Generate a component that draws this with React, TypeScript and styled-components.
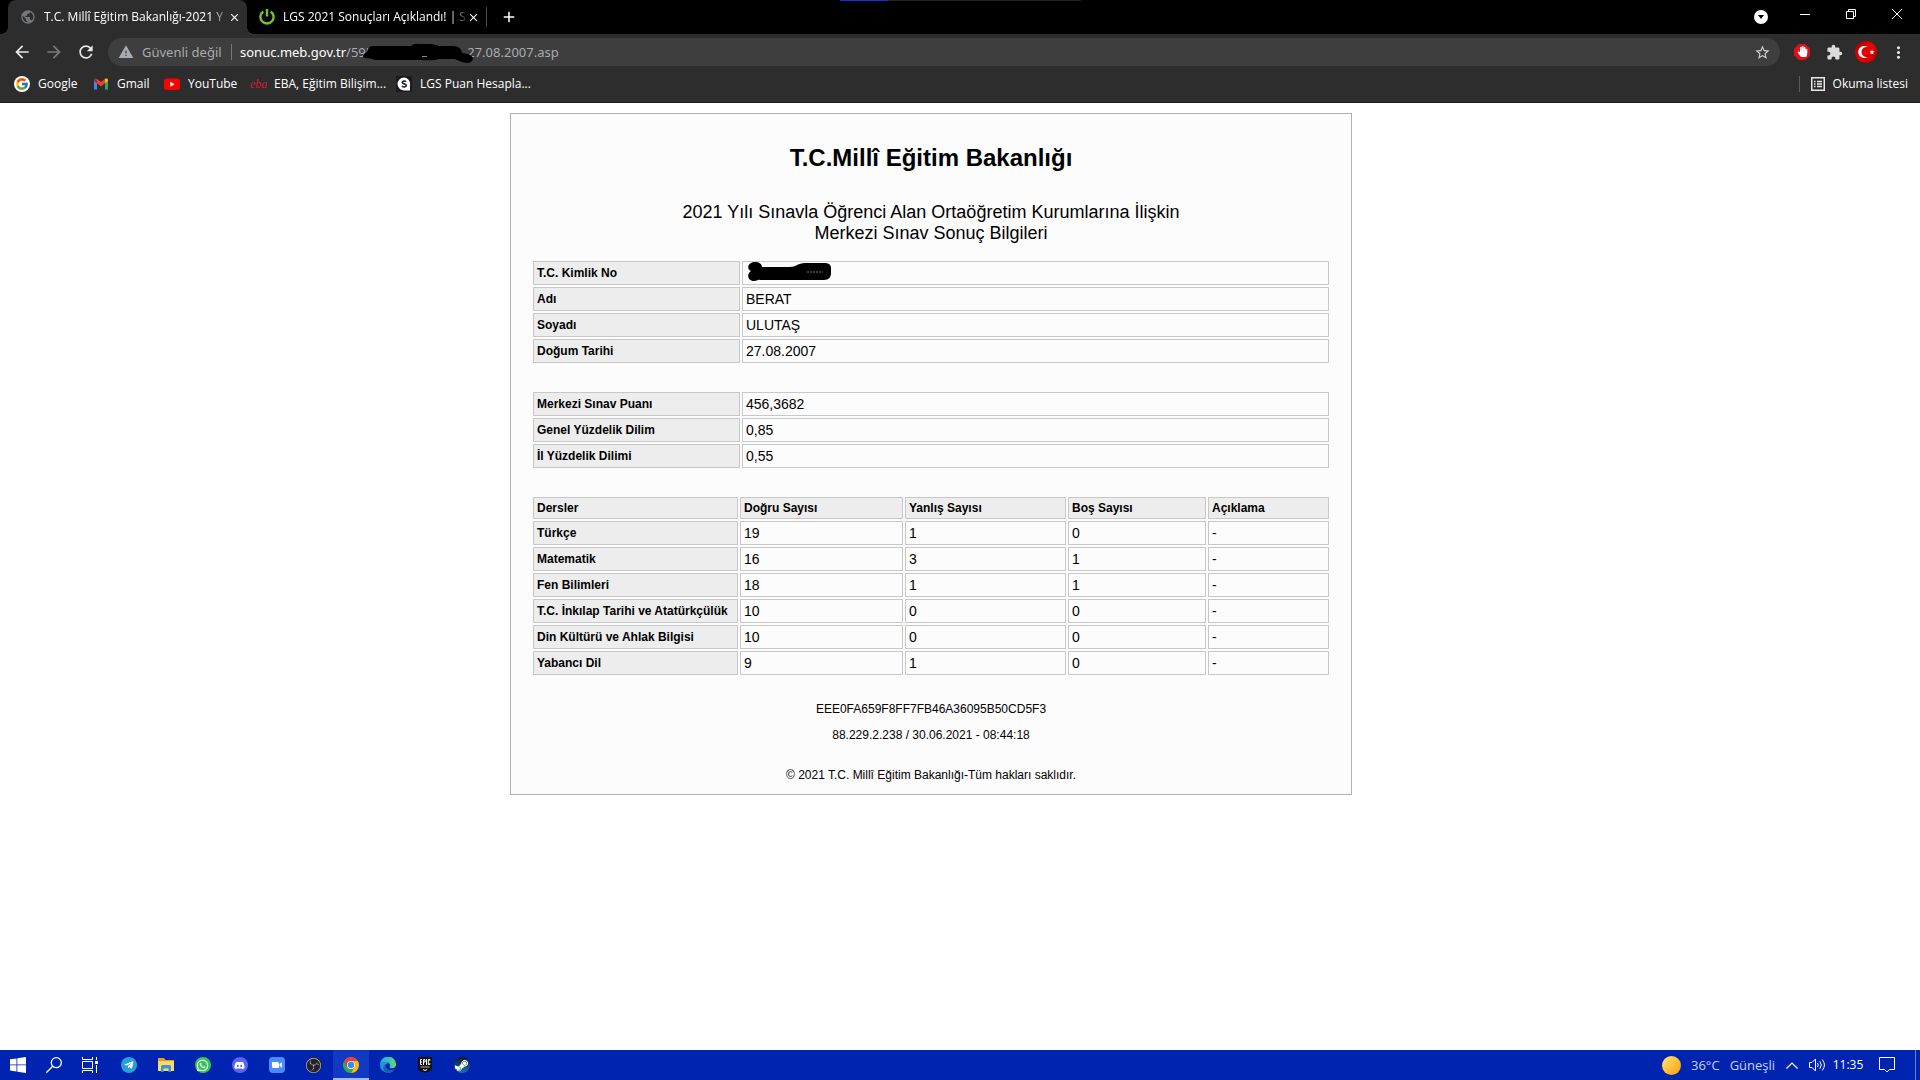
import React from "react";
import styled, { createGlobalStyle } from "styled-components";
import {
  MdAdd,
  MdArrowBack,
  MdArrowForward,
  MdClose,
  MdExtension,
  MdMoreVert,
  MdPublic,
  MdRefresh,
  MdStarBorder,
  MdWarning,
} from "react-icons/md";
import { FcGoogle } from "react-icons/fc";
import { FaDiscord, FaHandPaper, FaSteamSymbol, FaTelegramPlane, FaWhatsapp } from "react-icons/fa";
import { SiObsstudio } from "react-icons/si";

const uiFont = `"Open Sans", "Noto Sans", sans-serif`;
const pageFont = `"Liberation Sans", Arial, sans-serif`;

const GlobalStyle = createGlobalStyle`
  *, *::before, *::after { box-sizing: border-box; }
  html, body, #root { height: 100%; margin: 0; }
  body { background: #fff; }
  button, input { font: inherit; color: inherit; border: 0; padding: 0; margin: 0; background: none; }
  svg { display: block; flex: none; }
`;

const Screen = styled.div`
  display: flex;
  flex-direction: column;
  min-height: 100vh;
  font-family: ${uiFont};
  font-size: 12px;
  line-height: 16px;
`;

/* ---------- browser chrome ---------- */

const TabStrip = styled.header`
  position: relative;
  display: flex;
  height: 34px;
  padding-left: 8px;
  background: #000;
  color: #fff;
`;

const LoadingBar = styled.div`
  position: absolute;
  top: 0;
  left: 840px;
  width: 241px;
  height: 1px;
  background: linear-gradient(to right, #1433d6 48px, #222 48px);
`;

const Tab = styled.div<{ $active?: boolean }>`
  position: relative;
  display: flex;
  align-items: center;
  width: 239px;
  padding: 0 6px 0 12px;
  border-radius: 8px 8px 0 0;
  background: ${(p) => (p.$active ? "#2d2d2d" : "transparent")};

  &::before,
  &::after {
    content: "";
    display: ${(p) => (p.$active ? "block" : "none")};
    position: absolute;
    bottom: 0;
    width: 8px;
    height: 8px;
  }
  &::before {
    left: -8px;
    background: radial-gradient(circle at 0 0, transparent 8px, #2d2d2d 8px);
  }
  &::after {
    right: -8px;
    background: radial-gradient(circle at 100% 0, transparent 8px, #2d2d2d 8px);
  }
`;

const TabTitle = styled.span`
  flex: 1;
  min-width: 0;
  margin-left: 8px;
  overflow: hidden;
  white-space: nowrap;
  mask-image: linear-gradient(to right, #000 calc(100% - 16px), rgba(0, 0, 0, 0.2));
`;

const IconButton = styled.button<{ $size?: number }>`
  display: flex;
  align-items: center;
  justify-content: center;
  flex: none;
  width: ${(p) => p.$size ?? 14}px;
  height: ${(p) => p.$size ?? 14}px;
`;

const NewTab = styled.div`
  display: flex;
  align-items: center;
  gap: 8px;

  &::before {
    content: "";
    width: 1px;
    height: 20px;
    background: #4a4a4a;
  }
`;

const WindowButtons = styled.div`
  display: flex;
  margin-left: auto;
`;

const WindowButton = styled.button<{ $drop?: boolean }>`
  display: flex;
  align-items: center;
  justify-content: center;
  width: ${(p) => (p.$drop ? 42 : 46)}px;
  height: ${(p) => (p.$drop ? 34 : 28)}px;
`;

const Toolbar = styled.nav`
  display: flex;
  align-items: center;
  height: 36px;
  padding: 0 6px;
  background: #2d2d2d;
  color: #e8e8e8;
`;

const NavButtons = styled.div`
  display: flex;
  width: 102px;
`;

const Omnibox = styled.form`
  display: flex;
  align-items: center;
  flex: 1;
  height: 28px;
  padding: 0 8px 0 10px;
  border-radius: 14px;
  background: #3e3e3e;
  color: #a8abb0;
  font-family: "Noto Sans", "Open Sans", sans-serif;
  font-size: 13px;
  line-height: 20px;
  white-space: nowrap;
`;

const Security = styled.button`
  display: flex;
  align-items: center;
  gap: 8px;
  width: 113px;
`;

const Host = styled.label`
  padding-left: 8px;
  border-left: 1px solid #777;
  line-height: 16px;
  color: #fff;
`;

const UrlScribble = styled.svg`
  position: relative;
  margin: 0 -6px 0 -12px;
`;

const UrlInput = styled.input`
  flex: 1;
  min-width: 0;
  outline: none;
`;

const Extensions = styled.div`
  display: flex;
  align-items: center;
  width: 134px;
  padding-left: 6px;
`;

const Bookmarks = styled.nav`
  display: flex;
  align-items: center;
  height: 33px;
  padding: 0 12px 4px 14px;
  border-bottom: 1px solid #1d1d1d;
  background: #2d2d2d;
  color: #fff;
`;

const Bookmark = styled.a<{ $width: number }>`
  display: flex;
  align-items: center;
  gap: 8px;
  width: ${(p) => p.$width}px;
  color: inherit;
  text-decoration: none;
  white-space: nowrap;
`;

const EbaMark = styled.span`
  width: 16px;
  color: #d3202e;
  font-family: "Liberation Serif", serif;
  font-size: 12px;
  font-style: italic;
`;

const ReadingList = styled.button`
  display: flex;
  align-items: center;
  gap: 8px;
  height: 16px;
  margin-left: auto;
  padding-left: 11px;
  border-left: 1px solid #5a5a5a;
`;

/* ---------- result page ---------- */

const Page = styled.main`
  flex: 1;
  padding: 10px 58px 20px 0;
  background: #fff;
  color: #000;
  font-family: ${pageFont};
`;

const Card = styled.section`
  display: flex;
  flex-direction: column;
  width: 842px;
  margin: 0 auto;
  padding: 30px 20px 12px;
  border: 1px solid #b0b0b0;
  background: #fcfcfc;
  text-align: center;
`;

const Title = styled.h1`
  margin: 0 0 30px;
  font-size: 24px;
  line-height: 28px;
`;

const Subtitle = styled.p`
  margin: 0 0 15px;
  font-size: 18px;
  line-height: 21px;
`;

const DataTable = styled.table`
  width: 100%;
  margin-bottom: 25px;
  table-layout: fixed;
  border-collapse: separate;
  border-spacing: 2px;
  text-align: left;
`;

const Col = styled.col<{ $width?: number }>`
  width: ${(p) => (p.$width ? `${p.$width}px` : "auto")};
`;

const HeadCell = styled.th`
  padding: 3px;
  border: 1px solid #c8c8c8;
  background: #ededed;
  font-size: 12px;
  line-height: 14px;
  white-space: nowrap;
`;

const Cell = styled.td`
  padding: 3px;
  border: 1px solid #c8c8c8;
  font-size: 14px;
  line-height: 16px;
`;

const IdScribble = styled.svg`
  overflow: visible;
`;

const Note = styled.p<{ $gap?: number }>`
  margin: 0 0 ${(p) => p.$gap ?? 0}px;
  font-size: 12px;
  line-height: 14px;
`;

/* ---------- taskbar ---------- */

const Taskbar = styled.footer`
  display: flex;
  height: 30px;
  background: #0023b0;
  color: #fff;
`;

const TaskButton = styled.button<{ $active?: boolean }>`
  display: flex;
  align-items: center;
  justify-content: center;
  width: ${(p) => (p.$active ? 36 : 37)}px;
  height: 30px;
  margin-left: ${(p) => (p.$active ? 1 : 0)}px;
  background: ${(p) => (p.$active ? "#1239c4" : "transparent")};
  box-shadow: ${(p) => (p.$active ? "inset 0 -2px #a9b8f2" : "none")};
`;

const StartGroup = styled.div`
  display: flex;
  padding-right: 2px;
`;

const StartButton = styled(TaskButton)`
  width: 36px;
`;

const Disc = styled.span<{ $bg: string; $square?: boolean }>`
  display: flex;
  align-items: center;
  justify-content: center;
  width: 16px;
  height: 16px;
  border-radius: ${(p) => (p.$square ? 4 : 8)}px;
  background: ${(p) => p.$bg};
`;

const Tray = styled.div`
  display: flex;
  align-items: center;
  margin-left: auto;
`;

const Weather = styled.button`
  display: flex;
  align-items: center;
  gap: 10px;
  width: 118px;
  color: #c9d2f2;
  font-size: 13px;
  white-space: nowrap;
`;

const TrayButton = styled.button<{ $width: number }>`
  display: flex;
  align-items: center;
  justify-content: center;
  width: ${(p) => p.$width}px;
  height: 30px;
`;

const ShowDesktop = styled.button`
  width: 5px;
  height: 30px;
  margin-left: 8px;
  border-left: 1px solid #6c80d3;
`;

const identity: [string, string | null][] = [
  ["T.C. Kimlik No", null],
  ["Adı", "BERAT"],
  ["Soyadı", "ULUTAŞ"],
  ["Doğum Tarihi", "27.08.2007"],
];

const scores: [string, string][] = [
  ["Merkezi Sınav Puanı", "456,3682"],
  ["Genel Yüzdelik Dilim", "0,85"],
  ["İl Yüzdelik Dilimi", "0,55"],
];

const lessonHead = ["Dersler", "Doğru Sayısı", "Yanlış Sayısı", "Boş Sayısı", "Açıklama"];

const lessons = [
  ["Türkçe", "19", "1", "0", "-"],
  ["Matematik", "16", "3", "1", "-"],
  ["Fen Bilimleri", "18", "1", "1", "-"],
  ["T.C. İnkılap Tarihi ve Atatürkçülük", "10", "0", "0", "-"],
  ["Din Kültürü ve Ahlak Bilgisi", "10", "0", "0", "-"],
  ["Yabancı Dil", "9", "1", "0", "-"],
];

const GmailIcon = () => (
  <svg width="16" height="16" viewBox="0 0 16 16">
    <path d="M1 4v9.5h3V7z" fill="#4285f4" />
    <path d="M15 4v9.5h-3V7z" fill="#34a853" />
    <path d="M1 4.2C1 2.500 2.800 2 4 2.800V7.200L1 5z" fill="#c5221f" />
    <path d="M15 4.200c0-1.700-1.800-2.200-3-1.400v4.400L15 5z" fill="#fbbc04" />
    <path d="M4 2.800 8 6l4-3.200v4.400L8 10.400 4 7.200z" fill="#ea4335" />
  </svg>
);

const YouTubeIcon = () => (
  <svg width="16" height="16" viewBox="0 0 16 16">
    <rect y="2.500" width="16" height="11.500" rx="3" fill="#f00" />
    <path d="M6.300 5.700v5L10.600 8.200z" fill="#fff" />
  </svg>
);

const LgsIcon = () => (
  <svg width="16" height="16" viewBox="0 0 16 16">
    <rect width="16" height="16" fill="#1b1b1f" />
    <path d="M8 1.500a6.500 6.500 0 1 0 0 13h6V8A6.300 6.300 0 0 0 8 1.500z" fill="#fff" />
    <path d="M10.200 5.600C8.800 4.600 6.300 4.900 6.300 6.500S10.200 7.700 10.200 9.500 7.300 11.400 5.900 10.200" fill="none" stroke="#1d2840" strokeWidth="1.700" />
  </svg>
);

const PowerIcon = () => (
  <svg width="16" height="16" viewBox="0 0 16 16" fill="none" stroke="#78c12d" strokeWidth="2.400">
    <path d="M4.300 2.500a6.600 6.600 0 1 0 7.400 0" />
    <path d="M8 0v7.500" />
  </svg>
);

const FlagIcon = () => (
  <svg width="22" height="22" viewBox="0 0 22 22">
    <defs>
      <linearGradient id="flag" x1="0" y1="0" x2="1" y2="1">
        <stop offset="0" stopColor="#9c0000" />
        <stop offset="0.500" stopColor="#f20000" />
        <stop offset="1" stopColor="#a00000" />
      </linearGradient>
    </defs>
    <circle cx="11" cy="11" r="11" fill="url(#flag)" />
    <path d="M12.800 6.200a6 6 0 1 0 0 9.600 5 5 0 1 1 0-9.600z" fill="#fff" />
    <path d="m17 8.500.7 1.700 1.800.2-1.300 1.200.3 1.900-1.500-1-1.700.7.500-1.800-1.100-1.400 1.800-.1z" fill="#fff" />
  </svg>
);

const ReadingIcon = () => (
  <svg width="14" height="14" viewBox="0 0 14 14" stroke="#e8e8e8" fill="none">
    <rect x="0.750" y="0.750" width="12.500" height="12.500" strokeWidth="1.500" />
    <path d="M3 4.500h1.500M3 7h1.500M3 9.500h1.500M6 4.500h5M6 7h5M6 9.500h5" strokeWidth="1.300" />
  </svg>
);

const ChromeIcon = () => (
  <svg width="16" height="16" viewBox="0 0 48 48">
    <path d="M3.200 12A24 24 0 0 1 44.800 12H24L13.600 30z" fill="#ea4335" />
    <path d="M3.200 12A24 24 0 0 0 24 48L34.400 30 24 36 13.600 30z" fill="#34a853" />
    <path d="M44.800 12A24 24 0 0 1 24 48L34.400 30A12 12 0 0 0 24 12z" fill="#fbbc04" />
    <circle cx="24" cy="24" r="12" fill="#fff" />
    <circle cx="24" cy="24" r="9.500" fill="#4285f4" />
  </svg>
);

const EdgeIcon = () => (
  <svg width="16" height="16" viewBox="0 0 16 16">
    <defs>
      <linearGradient id="edgeTop" x1="0" x2="1">
        <stop offset="0" stopColor="#22a7e8" />
        <stop offset="0.600" stopColor="#36c7b5" />
        <stop offset="1" stopColor="#6be05a" />
      </linearGradient>
      <linearGradient id="edgeBody" x1="0" y1="0" x2="0.500" y2="1">
        <stop offset="0" stopColor="#2b9ae6" />
        <stop offset="1" stopColor="#1f7fd6" />
      </linearGradient>
    </defs>
    <path d="M0 8a8 8 0 0 1 16-1c.2 2.800-1.800 4.300-4 4.300-2 0-2.900-.9-2.200-1.900C11 7 8.500 5 6 5 3 5 .8 6.500 0 8z" fill="url(#edgeTop)" />
    <path d="M0 8c.8-1.600 2.800-3 5.600-3 1.600 0 3 .6 3.600 1.400C6 6 4.800 8.600 6 10.800c1.300 2.300 5 3.300 8.600 1.500A8 8 0 0 1 0 8z" fill="url(#edgeBody)" />
    <path d="M9.200 6.400C6 6 4.800 8.600 6 10.800c1.300 2.300 5 3.300 8.600 1.500A8 8 0 0 1 8 16C4.500 15.500 3.200 12.500 3.500 10.300 3.800 8 6 6 9.200 6.400z" fill="#1b5fb0" />
  </svg>
);

const FolderIcon = () => (
  <svg width="16" height="16" viewBox="0 0 16 16">
    <path d="M0 1h6l1.500 2H16v3H0z" fill="#e0a21c" />
    <path d="M0 4h16v10H0z" fill="#ffd869" />
    <path d="M3 15V9.500Q3 8 4.500 8h7Q13 8 13 9.500V15h-2.500v-3.500h-5V15z" fill="#3f94d6" />
  </svg>
);

export default function App() {
  return (
    <Screen>
      <GlobalStyle />
      <TabStrip>
        <LoadingBar />
        <Tab $active>
          <MdPublic size={16} color="#73777c" />
          <TabTitle>T.C. Millî Eğitim Bakanlığı-2021 Y</TabTitle>
          <IconButton aria-label="Sekmeyi kapat">
            <MdClose size={13} />
          </IconButton>
        </Tab>
        <Tab>
          <PowerIcon />
          <TabTitle>LGS 2021 Sonuçları Açıklandı! | S</TabTitle>
          <IconButton aria-label="Sekmeyi kapat">
            <MdClose size={13} />
          </IconButton>
        </Tab>
        <NewTab>
          <IconButton $size={28} aria-label="Yeni sekme">
            <MdAdd size={18} />
          </IconButton>
        </NewTab>
        <WindowButtons>
          <WindowButton $drop aria-label="Sekmelerde ara">
            <svg width="14" height="14" viewBox="0 0 14 14">
              <circle cx="7" cy="7" r="7" fill="#fff" />
              <path d="M4 5h6L7 9z" fill="#000" />
            </svg>
          </WindowButton>
          <WindowButton aria-label="Simge durumuna küçült">
            <svg width="10" height="10" viewBox="0 0 10 10">
              <path d="M0 5.500h10" stroke="#fff" />
            </svg>
          </WindowButton>
          <WindowButton aria-label="Aşağı geri getir">
            <svg width="10" height="10" viewBox="0 0 10 10" fill="none" stroke="#fff">
              <path d="M.5 2.500h7v7h-7zM2.500 2.500v-2h7v7h-2" />
            </svg>
          </WindowButton>
          <WindowButton aria-label="Kapat">
            <svg width="10" height="10" viewBox="0 0 10 10" stroke="#fff">
              <path d="M0 0l10 10M10 0 0 10" />
            </svg>
          </WindowButton>
        </WindowButtons>
      </TabStrip>

      <Toolbar>
        <NavButtons>
          <IconButton $size={32} aria-label="Geri">
            <MdArrowBack size={20} />
          </IconButton>
          <IconButton $size={32} aria-label="İleri">
            <MdArrowForward size={20} color="#7a7a7a" />
          </IconButton>
          <IconButton $size={32} aria-label="Yenile">
            <MdRefresh size={20} />
          </IconButton>
        </NavButtons>
        <Omnibox onSubmit={(e) => e.preventDefault()}>
          <Security type="button">
            <MdWarning size={16} />
            Güvenli değil
          </Security>
          <Host htmlFor="address">sonuc.meb.gov.tr</Host>
          <span>/595</span>
          <UrlScribble width="112" height="22" viewBox="0 0 112 22">
            <path d="M2 15Q3 12 6 11 7 5 12 5H50Q53 2 58 3H70Q76 4 78 5H92Q100 5 101 12 112 13 112 18 111 22 106 22 99 21 94 18H78Q74 20 60 19H14Q10 17 4 17 2 17 2 15z" />
            <path d="M61 15.500h5" stroke="#888" />
          </UrlScribble>
          <UrlInput id="address" defaultValue="27.08.2007.asp" />
          <IconButton type="button" $size={20} aria-label="Yer işareti ekle">
            <MdStarBorder size={17} color="#d0d0d0" />
          </IconButton>
        </Omnibox>
        <Extensions>
          <IconButton $size={32} aria-label="Reklam engelleyici">
            <svg width="16" height="16" viewBox="0 0 16 16">
              <path d="M4.700 0h6.600L16 4.700v6.600L11.300 16H4.700L0 11.300V4.700z" fill="#e30e16" />
              <FaHandPaper x={3} y={2} size={11} color="#fff" />
            </svg>
          </IconButton>
          <IconButton $size={32} aria-label="Uzantılar">
            <MdExtension size={17} color="#dcdcdc" />
          </IconButton>
          <IconButton $size={32} aria-label="Profil">
            <FlagIcon />
          </IconButton>
          <IconButton $size={32} aria-label="Menü">
            <MdMoreVert size={19} />
          </IconButton>
        </Extensions>
      </Toolbar>

      <Bookmarks>
        <Bookmark href="#google" $width={79}>
          <Disc $bg="#fff">
            <FcGoogle size={14} />
          </Disc>
          Google
        </Bookmark>
        <Bookmark href="#gmail" $width={71}>
          <GmailIcon />
          Gmail
        </Bookmark>
        <Bookmark href="#youtube" $width={86}>
          <YouTubeIcon />
          YouTube
        </Bookmark>
        <Bookmark href="#eba" $width={146}>
          <EbaMark>eba</EbaMark>
          EBA, Eğitim Bilişim...
        </Bookmark>
        <Bookmark href="#lgs" $width={140}>
          <LgsIcon />
          LGS Puan Hesapla...
        </Bookmark>
        <ReadingList>
          <ReadingIcon />
          Okuma listesi
        </ReadingList>
      </Bookmarks>

      <Page>
        <Card>
          <Title>T.C.Millî Eğitim Bakanlığı</Title>
          <Subtitle>
            2021 Yılı Sınavla Öğrenci Alan Ortaöğretim Kurumlarına İlişkin
            <br />
            Merkezi Sınav Sonuç Bilgileri
          </Subtitle>

          <DataTable>
            <colgroup>
              <Col $width={207} />
              <Col />
            </colgroup>
            <tbody>
              {identity.map(([label, value]) => (
                <tr key={label}>
                  <HeadCell scope="row">{label}</HeadCell>
                  <Cell>
                    {value ?? (
                      <IdScribble width="86" height="16" viewBox="0 0 86 16">
                        <path
                          d="M9-3C2-3 0 4 5 6 0 9 2 16 8 16c3 0 4-2 6-1h64c5 0 7-3 7-7V3c0-4-3-5-7-5H59C52-2 50 2 44 2H16C16-1 13-3 9-3z"
                          fill="#000"
                        />
                        <path d="M61 7h16" stroke="#777" strokeDasharray="2 1" />
                      </IdScribble>
                    )}
                  </Cell>
                </tr>
              ))}
            </tbody>
          </DataTable>

          <DataTable>
            <colgroup>
              <Col $width={207} />
              <Col />
            </colgroup>
            <tbody>
              {scores.map(([label, value]) => (
                <tr key={label}>
                  <HeadCell scope="row">{label}</HeadCell>
                  <Cell>{value}</Cell>
                </tr>
              ))}
            </tbody>
          </DataTable>

          <DataTable>
            <colgroup>
              <Col $width={205} />
              <Col $width={163} />
              <Col $width={161} />
              <Col $width={138} />
              <Col />
            </colgroup>
            <thead>
              <tr>
                {lessonHead.map((h) => (
                  <HeadCell key={h} scope="col">
                    {h}
                  </HeadCell>
                ))}
              </tr>
            </thead>
            <tbody>
              {lessons.map(([name, ...values]) => (
                <tr key={name}>
                  <HeadCell scope="row">{name}</HeadCell>
                  {values.map((v, i) => (
                    <Cell key={i}>{v}</Cell>
                  ))}
                </tr>
              ))}
            </tbody>
          </DataTable>

          <Note $gap={12}>EEE0FA659F8FF7FB46A36095B50CD5F3</Note>
          <Note $gap={26}>88.229.2.238 / 30.06.2021 - 08:44:18</Note>
          <Note>© 2021 T.C. Millî Eğitim Bakanlığı-Tüm hakları saklıdır.</Note>
        </Card>
      </Page>

      <Taskbar>
        <StartGroup>
          <StartButton aria-label="Başlat">
            <svg width="16" height="16" viewBox="0 0 16 16" fill="#fff">
              <path d="M0 2.300 6.500 1.400v6.100H0zM7.300 1.300 16 0v7.500H7.300zM0 8.300h6.500v6.200L0 13.600zM7.300 8.300H16V16l-8.700-1.300z" />
            </svg>
          </StartButton>
          <StartButton aria-label="Ara">
            <svg width="16" height="16" viewBox="0 0 16 16" fill="none" stroke="#fff" strokeWidth="1.300">
              <circle cx="10.300" cy="5.700" r="5" />
              <path d="M6.700 9.300.4 15.600" />
            </svg>
          </StartButton>
          <StartButton aria-label="Görev görünümü">
            <svg width="16" height="16" viewBox="0 0 16 16" fill="none" stroke="#fff">
              <path d="M.5 0v2.500h10V0M.5 16v-2.500h10V16M.5 4.500h10v7H.5zM14.500 0v3M14.500 8v8" />
              <rect x="13" y="4" width="3" height="3" fill="#fff" stroke="none" />
            </svg>
          </StartButton>
        </StartGroup>
        <TaskButton aria-label="Telegram">
          <Disc $bg="#26a0d9">
            <FaTelegramPlane size={10} />
          </Disc>
        </TaskButton>
        <TaskButton aria-label="Dosya Gezgini">
          <FolderIcon />
        </TaskButton>
        <TaskButton aria-label="WhatsApp">
          <Disc $bg="#37c553">
            <FaWhatsapp size={13} />
          </Disc>
        </TaskButton>
        <TaskButton aria-label="Discord">
          <Disc $bg="#5865f2">
            <FaDiscord size={11} />
          </Disc>
        </TaskButton>
        <TaskButton aria-label="Zoom">
          <Disc $bg="#4a8cff" $square>
            <svg width="10" height="6" viewBox="0 0 10 6" fill="#fff">
              <path d="M0 0h5.500Q7 0 7 1.500V6H1.500Q0 6 0 4.500zM7.500 2 10 .3v5.400L7.500 4z" />
            </svg>
          </Disc>
        </TaskButton>
        <TaskButton aria-label="OBS Studio">
          <Disc $bg="#25222a">
            <SiObsstudio size={15} color="#b9b9bd" />
          </Disc>
        </TaskButton>
        <TaskButton $active aria-label="Google Chrome">
          <ChromeIcon />
        </TaskButton>
        <TaskButton aria-label="Microsoft Edge">
          <EdgeIcon />
        </TaskButton>
        <TaskButton aria-label="Epic Games">
          <svg width="16" height="16" viewBox="0 0 16 16">
            <path d="M1 0h14v13l-7 3-7-3z" fill="#111" />
            <g fill="none" stroke="#fff" strokeWidth="1">
              <path d="M5 2.500H3.500v5H5M3.500 5H5M6.500 8V2.500H8V5H6.500M9.500 2v6M12.800 4V2.500h-1.500v5h1.500V6" />
              <path d="M3.500 10h9" stroke="#aaa" />
              <path d="M6 12.500 8 13.500l2-1" />
            </g>
          </svg>
        </TaskButton>
        <TaskButton aria-label="Steam">
          <Disc $bg="linear-gradient(#10182e, #1277b4)">
            <FaSteamSymbol size={15} />
          </Disc>
        </TaskButton>

        <Tray>
          <Weather>
            <svg width="19" height="19" viewBox="0 0 19 19">
              <defs>
                <linearGradient id="sun" x1="0" y1="0" x2="1" y2="1">
                  <stop offset="0" stopColor="#ffe873" />
                  <stop offset="1" stopColor="#ff9a0c" />
                </linearGradient>
              </defs>
              <circle cx="9.500" cy="9.500" r="9.500" fill="url(#sun)" />
            </svg>
            <span>36°C</span>
            <span>Güneşli</span>
          </Weather>
          <TrayButton $width={24} aria-label="Gizli simgeleri göster">
            <svg width="12" height="7" viewBox="0 0 12 7" fill="none" stroke="#fff" strokeWidth="1.200">
              <path d="M.5 6.500 6 1l5.500 5.500" />
            </svg>
          </TrayButton>
          <TrayButton $width={26} aria-label="Ses">
            <svg width="17" height="14" viewBox="0 0 17 14" fill="none" stroke="#fff">
              <path d="M.5 4.500H3L6.500 1v12L3 9.500H.5zM8.500 5q1.500 2 0 4M10.800 3.200q3 3.800 0 7.600M13.200 1.500q4.500 5.500 0 11" />
            </svg>
          </TrayButton>
          <TrayButton $width={36}>11:35</TrayButton>
          <TrayButton $width={41} aria-label="Bildirimler">
            <svg width="16" height="16" viewBox="0 0 16 16" fill="none" stroke="#fff">
              <path d="M.5.5h15v12h-5L8 15l-2.500-2.500h-5z" />
            </svg>
          </TrayButton>
          <ShowDesktop aria-label="Masaüstünü göster" />
        </Tray>
      </Taskbar>
    </Screen>
  );
}
